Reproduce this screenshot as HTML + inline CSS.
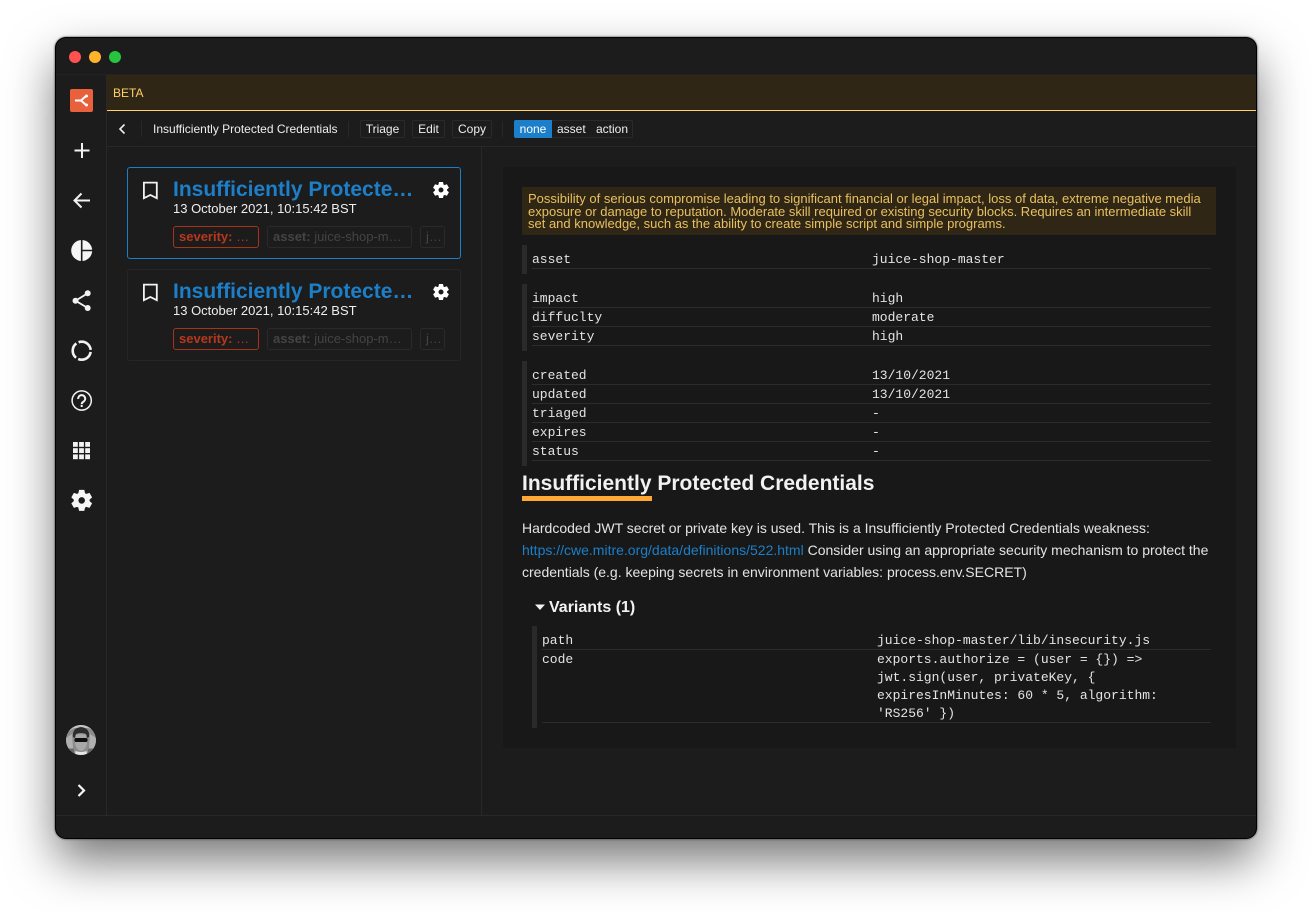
<!DOCTYPE html>
<html><head><meta charset="utf-8"><style>
*{box-sizing:border-box}
html,body{margin:0;padding:0;width:1312px;height:912px;background:#fff;overflow:hidden;font-family:"Liberation Sans",sans-serif}
.a{position:absolute;white-space:nowrap}
#win{position:absolute;left:56px;top:38px;width:1200px;height:800px;background:#1c1c1c;border-radius:10px;box-shadow:0 0 0 1px #000,0 0 2px 1px #333,0 22px 48px 0 rgba(0,0,0,.55);overflow:hidden}
.page{position:absolute;left:0;top:0;width:1312px;height:912px}
.btn{position:absolute;top:120px;height:18px;border:1px solid #2a2a2a;border-radius:2px;font-size:12px;line-height:16px;color:#eee;text-align:center}
.title{position:absolute;left:173px;font-size:21px;font-weight:bold;color:#1c7fc9;line-height:24px;white-space:nowrap}
.date{position:absolute;left:173px;font-size:13px;line-height:16px;color:#eee;white-space:nowrap}
.tag{position:absolute;height:22px;border:1px solid #2a2a2a;border-radius:3px;font-size:13px;line-height:20px;color:#444;padding-left:5px;white-space:nowrap;overflow:hidden}
.tag.r{border-color:#a8331a;color:#b8381c}
.card{position:absolute;left:127px;width:334px;border:1px solid #262626;border-radius:3px}
.m{position:absolute;font:13px/16px "Liberation Mono",monospace;color:#e4e4e4;white-space:pre}
.l{position:absolute;height:1px;background:#2c2c2c}
.bar{position:absolute;width:5px;background:#2a2a2a}
</style></head><body>
<div id="win"></div>
<div class="page">
<!-- traffic -->
<div class="a" style="left:69px;top:51px;width:12px;height:12px;border-radius:50%;background:#ff5250"></div>
<div class="a" style="left:89px;top:51px;width:12px;height:12px;border-radius:50%;background:#feb32a"></div>
<div class="a" style="left:109px;top:51px;width:12px;height:12px;border-radius:50%;background:#27c53f"></div>
<div class="a" style="left:56px;top:74px;width:1200px;height:1px;background:#222"></div>
<!-- beta -->
<div class="a" style="left:107px;top:75px;width:1149px;height:36px;background:#302616;border-bottom:1px solid #ffd166"></div>
<div class="a" style="left:113px;top:85px;font-size:12px;line-height:16px;color:#ffd166">BETA</div>
<!-- structure lines -->
<div class="a" style="left:106px;top:75px;width:1px;height:740px;background:#282828"></div>
<div class="a" style="left:107px;top:146px;width:1149px;height:1px;background:#282828"></div>
<div class="a" style="left:481px;top:147px;width:1px;height:668px;background:#282828"></div>
<div class="a" style="left:56px;top:815px;width:1200px;height:1px;background:#282828"></div>
<!-- toolbar -->
<svg class="a" style="left:116px;top:122px" width="12" height="14" viewBox="0 0 12 14"><path d="M8.500 2.500 4 7l4.500 4.500" fill="none" stroke="#eee" stroke-width="1.600"/></svg>
<div class="a" style="left:141px;top:121px;width:1px;height:16px;background:#282828"></div>
<div class="a" style="left:153px;top:121px;font-size:12px;line-height:16px;color:#eee">Insufficiently Protected Credentials</div>
<div class="a" style="left:348px;top:121px;width:1px;height:16px;background:#282828"></div>
<div class="btn" style="left:360px;width:45px">Triage</div>
<div class="btn" style="left:412px;width:33px">Edit</div>
<div class="btn" style="left:452px;width:40px">Copy</div>
<div class="a" style="left:502px;top:121px;width:1px;height:16px;background:#282828"></div>
<div class="btn" style="left:514px;width:119px"></div>
<div class="a" style="left:514px;top:120px;width:38px;height:18px;background:#1c7fc9;border-radius:2px 0 0 2px;font-size:12px;line-height:18px;color:#fff;text-align:center">none</div>
<div class="a" style="left:557px;top:121px;font-size:12px;line-height:16px;color:#eee">asset</div>
<div class="a" style="left:596px;top:121px;font-size:12px;line-height:16px;color:#eee">action</div>
<!-- sidebar icons -->
<svg class="a" style="left:56px;top:75px" width="50" height="740" viewBox="56 75 50 740">
<rect x="70" y="89" width="23" height="23" rx="2" fill="#e8603c"/>
<path d="M75 100.500h6l5-4.500M81 100.500l5 4.500" fill="none" stroke="#fff" stroke-width="2"/><circle cx="86.500" cy="96" r="1.500" fill="#fff"/><circle cx="86.500" cy="105" r="1.500" fill="#fff"/>
<path d="M82 143v15M74.500 150.500h15" stroke="#f2f2f2" stroke-width="2" fill="none"/>
<path d="M90 200.500H75M81.500 193.500l-7 7 7 7" stroke="#f2f2f2" stroke-width="2" fill="none"/>
<circle cx="81.700" cy="250.500" r="10.500" fill="#f5f5f5"/><path d="M81.700 240v21M81.700 250.500h11" stroke="#1c1c1c" stroke-width="1.600" fill="none"/>
<circle cx="75.500" cy="300.700" r="3" fill="#f2f2f2"/><circle cx="87.700" cy="293.300" r="3" fill="#f2f2f2"/><circle cx="87.700" cy="308" r="3" fill="#f2f2f2"/><path d="M87.700 293.300l-12.200 7.400L87.700 308" fill="none" stroke="#f2f2f2" stroke-width="1.800"/>
<circle cx="81.700" cy="350.700" r="9" fill="none" stroke="#f2f2f2" stroke-width="2.600" stroke-dasharray="16.350 2.500" stroke-dashoffset="-1.250"/>
<circle cx="81.700" cy="400.500" r="9.600" fill="none" stroke="#f2f2f2" stroke-width="1.500"/>
<path d="M78.200 399a3.500 3.500 0 1 1 5.500 2.500c-1.300 .9-2 1.200-2 2.700" fill="none" stroke="#f2f2f2" stroke-width="2"/><rect x="80.700" y="405" width="2" height="2" fill="#f2f2f2"/>
<g fill="#f2f2f2"><rect x="73" y="442" width="4.800" height="4.800"/><rect x="79.100" y="442" width="4.800" height="4.800"/><rect x="85.200" y="442" width="4.800" height="4.800"/><rect x="73" y="448.200" width="4.800" height="4.800"/><rect x="79.100" y="448.200" width="4.800" height="4.800"/><rect x="85.200" y="448.200" width="4.800" height="4.800"/><rect x="73" y="454.400" width="4.800" height="4.800"/><rect x="79.100" y="454.400" width="4.800" height="4.800"/><rect x="85.200" y="454.400" width="4.800" height="4.800"/></g>
<g transform="translate(81.700 500.400)"><circle r="5.600" fill="none" stroke="#f5f5f5" stroke-width="4.600"/><g fill="#f5f5f5"><path d="M-2.600-10.500h5.200l.9 4h-7z"/><path d="M-2.600-10.500h5.200l.9 4h-7z" transform="rotate(60)"/><path d="M-2.600-10.500h5.200l.9 4h-7z" transform="rotate(120)"/><path d="M-2.600-10.500h5.200l.9 4h-7z" transform="rotate(180)"/><path d="M-2.600-10.500h5.200l.9 4h-7z" transform="rotate(240)"/><path d="M-2.600-10.500h5.200l.9 4h-7z" transform="rotate(300)"/></g></g>
<defs><clipPath id="av"><circle cx="81" cy="740" r="15"/></clipPath></defs>
<g clip-path="url(#av)"><rect x="66" y="725" width="30" height="30" fill="#8c8c8c"/><path d="M66 725h30v6l-8-3-14 0-8 5z" fill="#c4c4c4"/><path d="M66 738l6-4 1 14-7 2zM96 738l-6-4-1 14 7 2z" fill="#b0b0b0"/><path d="M66 748l8 1 0 6h-8zM96 748l-8 1 0 6h8z" fill="#6a6a6a"/><path d="M73 737q-1-9 8-10 9 1 8 10l-2 1-1-4q-5-2-10 0l-1 4z" fill="#2c2c2c"/><path d="M75.500 735q5.500-2 11 0l.5 8q-1 7-6 8-5-1-6-8z" fill="#a8a8a8"/><rect x="74.500" y="738" width="13" height="4" rx="1.500" fill="#0e0e0e"/><path d="M75 755l.5-4q5.500 2 11 0l.5 4z" fill="#e6e6e6"/></g>
<path d="M78.500 785l5.500 5.500-5.500 5.500" fill="none" stroke="#f5f5f5" stroke-width="2.200"/>
</svg>
<!-- cards -->
<div class="card" style="top:167px;height:92px;border-color:#1c7fc9"></div>
<div class="card" style="top:269px;height:92px"></div>
<svg class="a" style="left:142px;top:181px" width="18" height="20" viewBox="0 0 18 20"><path d="M1.900 1.600H14.800V17.200L8.350 14 1.900 17.200z" fill="none" stroke="#f2f2f2" stroke-width="1.800"/></svg>
<svg class="a" style="left:142px;top:283px" width="18" height="20" viewBox="0 0 18 20"><path d="M1.900 1.600H14.800V17.200L8.350 14 1.900 17.200z" fill="none" stroke="#f2f2f2" stroke-width="1.800"/></svg>
<div class="title" style="top:178px">Insufficiently Protecte…</div>
<div class="title" style="top:280px">Insufficiently Protecte…</div>
<div class="date" style="top:201px">13 October 2021, 10:15:42 BST</div>
<div class="date" style="top:303px">13 October 2021, 10:15:42 BST</div>
<svg class="a" style="left:433px;top:182px" width="16" height="16" viewBox="-8 -8 16 16"><g transform="scale(.76)"><circle r="5.600" fill="none" stroke="#fff" stroke-width="4.600"/><g fill="#fff"><path d="M-2.600-10.500h5.200l.9 4h-7z"/><path d="M-2.600-10.500h5.200l.9 4h-7z" transform="rotate(60)"/><path d="M-2.600-10.500h5.200l.9 4h-7z" transform="rotate(120)"/><path d="M-2.600-10.500h5.200l.9 4h-7z" transform="rotate(180)"/><path d="M-2.600-10.500h5.200l.9 4h-7z" transform="rotate(240)"/><path d="M-2.600-10.500h5.200l.9 4h-7z" transform="rotate(300)"/></g></g></svg>
<svg class="a" style="left:433px;top:284px" width="16" height="16" viewBox="-8 -8 16 16"><g transform="scale(.76)"><circle r="5.600" fill="none" stroke="#fff" stroke-width="4.600"/><g fill="#fff"><path d="M-2.600-10.500h5.200l.9 4h-7z"/><path d="M-2.600-10.500h5.200l.9 4h-7z" transform="rotate(60)"/><path d="M-2.600-10.500h5.200l.9 4h-7z" transform="rotate(120)"/><path d="M-2.600-10.500h5.200l.9 4h-7z" transform="rotate(180)"/><path d="M-2.600-10.500h5.200l.9 4h-7z" transform="rotate(240)"/><path d="M-2.600-10.500h5.200l.9 4h-7z" transform="rotate(300)"/></g></g></svg>
<div class="tag r" style="left:173px;top:226px;width:86px"><b>severity:</b> …</div>
<div class="tag" style="left:267px;top:226px;width:145px"><b>asset:</b> juice-shop-m…</div>
<div class="tag" style="left:420px;top:226px;width:25px">j…</div>
<div class="tag r" style="left:173px;top:328px;width:86px"><b>severity:</b> …</div>
<div class="tag" style="left:267px;top:328px;width:145px"><b>asset:</b> juice-shop-m…</div>
<div class="tag" style="left:420px;top:328px;width:25px">j…</div>
<!-- detail -->
<div class="a" style="left:503px;top:167px;width:733px;height:581px;background:#181818"></div>
<div class="a" style="left:522px;top:187px;width:694px;height:48px;background:#302616"></div>
<div class="a" style="left:528px;top:193px;font-size:13px;line-height:12.500px;color:#e8c060">Possibility of serious compromise leading to significant financial or legal impact, loss of data, extreme negative media<br>exposure or damage to reputation. Moderate skill required or existing security blocks. Requires an intermediate skill<br>set and knowledge, such as the ability to create simple script and simple programs.</div>

<div class="bar" style="left:522px;top:245px;height:29px"></div>
<div class="m" style="left:532px;top:252px">asset</div><div class="m" style="left:872px;top:252px">juice-shop-master</div><div class="l" style="left:532px;top:268px;width:679px"></div>
<div class="bar" style="left:522px;top:284px;height:67px"></div>
<div class="m" style="left:532px;top:291px">impact</div><div class="m" style="left:872px;top:291px">high</div><div class="l" style="left:532px;top:307px;width:679px"></div>
<div class="m" style="left:532px;top:310px">diffuclty</div><div class="m" style="left:872px;top:310px">moderate</div><div class="l" style="left:532px;top:326px;width:679px"></div>
<div class="m" style="left:532px;top:329px">severity</div><div class="m" style="left:872px;top:329px">high</div><div class="l" style="left:532px;top:345px;width:679px"></div>
<div class="bar" style="left:522px;top:361px;height:105px"></div>
<div class="m" style="left:532px;top:368px">created</div><div class="m" style="left:872px;top:368px">13/10/2021</div><div class="l" style="left:532px;top:384px;width:679px"></div>
<div class="m" style="left:532px;top:387px">updated</div><div class="m" style="left:872px;top:387px">13/10/2021</div><div class="l" style="left:532px;top:403px;width:679px"></div>
<div class="m" style="left:532px;top:406px">triaged</div><div class="m" style="left:872px;top:406px">-</div><div class="l" style="left:532px;top:422px;width:679px"></div>
<div class="m" style="left:532px;top:425px">expires</div><div class="m" style="left:872px;top:425px">-</div><div class="l" style="left:532px;top:441px;width:679px"></div>
<div class="m" style="left:532px;top:444px">status</div><div class="m" style="left:872px;top:444px">-</div><div class="l" style="left:532px;top:460px;width:679px"></div>

<div class="a" style="left:522px;top:471px;font-size:21px;line-height:26px;font-weight:bold;color:#f2f2f2">Insufficiently Protected Credentials</div>
<div class="a" style="left:522px;top:496px;width:130px;height:5px;background:#ffa733"></div>
<div class="a" style="left:522px;top:517px;font-size:14px;line-height:22px;color:#e4e4e4">Hardcoded JWT secret or private key is used. This is a Insufficiently Protected Credentials weakness:<br><span style="color:#1c7fc9">https://cwe.mitre.org/data/definitions/522.html</span> Consider using an appropriate security mechanism to protect the<br>credentials (e.g. keeping secrets in environment variables: process.env.SECRET)</div>
<svg class="a" style="left:535px;top:604px" width="11" height="7" viewBox="0 0 11 7"><path d="M0 .5h10L5 6z" fill="#f2f2f2"/></svg>
<div class="a" style="left:549px;top:598px;font-size:16px;line-height:20px;font-weight:bold;color:#f2f2f2">Variants (1)</div>
<div class="bar" style="left:532px;top:626px;height:102px"></div>
<div class="m" style="left:542px;top:633px">path</div><div class="m" style="left:877px;top:633px">juice-shop-master/lib/insecurity.js</div><div class="l" style="left:542px;top:649px;width:669px"></div>
<div class="m" style="left:542px;top:652px">code</div><div class="m" style="left:877px;top:651px;line-height:18px">exports.authorize = (user = {}) =&gt;
jwt.sign(user, privateKey, {
expiresInMinutes: 60 * 5, algorithm:
'RS256' })</div><div class="l" style="left:542px;top:722px;width:669px"></div>
</div>
</body></html>
